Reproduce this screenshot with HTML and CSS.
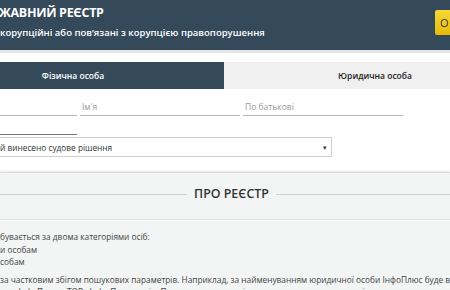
FILE: index.html
```html
<html>
    <head>
        <title>Реєстр</title>
        <link rel="stylesheet" href="styles.css">
    </head>
    <body>
        <div class="header">
            <div class="brand">
                <h1 class="title">ЖАВНИЙ РЕЄСТР</h1>
                <p class="subtitle">корупційні або пов’язані з корупцією правопорушення</p>
            </div>
            <button class="btn-login">О</button>
        </div>
        <div class="header-edge"></div>

        <div class="tabs">
            <div class="tab active">Фізична особа</div>
            <div class="tab">Юридична особа</div>
        </div>

        <div class="fields">
            <input class="field" type="text">
            <input class="field" type="text" placeholder="Ім'я">
            <input class="field" type="text" placeholder="По батькові">
        </div>
        <div class="fields second">
            <input class="field dark" type="text">
        </div>

        <div class="select">
            <span>й винесено судове рішення</span>
            <span class="arrow">&#9662;</span>
        </div>

        <div class="about">
            <h2 class="about-title"><span>ПРО РЕЄСТР</span></h2>
            <div class="about-text">
                <p>бувається за двома категоріями осіб:</p>
                <p>и особам</p>
                <p>собам</p>
                <p class="gap">за частковим збігом пошукових параметрів. Наприклад, за найменуванням юридичної особи ІнфоПлюс буде в</p>
                <p>ню «ІнфоПлюс», ТОВ «Інфо Плюс» та ін. Пошук ведеться в усіх полях реєстру, включаючи і</p>
            </div>
        </div>
    </body>
</html>
```

FILE: styles.css
```css
html, body {
    margin: 0;
    overflow: hidden;
}
body {
    font-family: 'Open Sans', sans-serif;
    background: #fff;
    color: #444;
}
.header {
    display: flex;
    align-items: flex-start;
    height: 50px;
    background-color: #344a5a;
    color: #fff;
}
.brand {
    flex: 1;
}
.title {
    margin: 5px 0 0 -1px;
    font-size: 12.5px;
    font-weight: 700;
    letter-spacing: -0.3px;
    line-height: 16px;
}
.subtitle {
    margin: 5px 0 0 0;
    font-size: 9.5px;
    font-weight: 600;
    line-height: 14px;
}
.btn-login {
    margin: 10px -25px 0 0;
    width: 40px;
    height: 25px;
    padding: 0 0 0 5px;
    border: none;
    border-radius: 2px;
    text-align: left;
    font-family: 'Open Sans', sans-serif;
    font-size: 11px;
    color: #333;
    background-image: linear-gradient(#f7d836, #e7b90a);
}
.header-edge {
    height: 3px;
    background: #e3e6e7;
}
.tabs {
    display: flex;
    margin: 9px 0 0 -78px;
}
.tab {
    flex: 0 0 302px;
    height: 27px;
    line-height: 27px;
    text-align: center;
    font-size: 8.5px;
    font-weight: 600;
    color: #222;
    background: #f0f0f0;
}
.tab.active {
    background: #344a5a;
    color: #fff;
}
.fields {
    display: flex;
    gap: 3px;
    margin: 0 0 0 -83px;
    padding-top: 8px;
}
.field {
    flex: 0 0 160px;
    height: 19px;
    padding: 0 2px;
    border: none;
    border-bottom: 1px solid #b8b8b8;
    outline: none;
    font-family: 'Open Sans', sans-serif;
    font-size: 8.5px;
    color: #333;
}
.field::placeholder {
    color: #9a9a9a;
}
.fields.second {
    padding-top: 0;
}
.field.dark {
    border-bottom: 1px solid #777;
}
.select {
    display: flex;
    justify-content: space-between;
    align-items: center;
    width: 331px;
    height: 18px;
    margin-top: 2px;
    border: 1px solid #cfcfcf;
    border-left: none;
    font-size: 8.3px;
    color: #333;
}
.select .arrow {
    font-size: 7px;
    margin-right: 4px;
}
.about {
    margin-top: 15px;
    border-top: 1px solid #dcdcdc;
    box-shadow: 0 -1px 2px #e6e6e6;
    background: #f3f4f4;
    height: 200px;
}
.about-title {
    display: flex;
    align-items: center;
    gap: 7px;
    margin: 0;
    padding: 11px 0 15px;
    border-bottom: 1px solid #dedede;
    font-size: 12.4px;
    font-weight: 600;
    color: #333;
    line-height: 20px;
}
.about-title::before,
.about-title::after {
    content: "";
    flex: 1;
    border-top: 1px solid #d0d0d0;
}
.about-title::before {
    flex: 0 0 187px;
}
.about-text {
    border-top: 1px solid #fff;
    padding-top: 10px;
    font-size: 8.3px;
    color: #444;
}
.about-text p {
    margin: 0;
    line-height: 12.5px;
    white-space: nowrap;
}
.about-text .gap {
    margin-top: 5px;
}
```
